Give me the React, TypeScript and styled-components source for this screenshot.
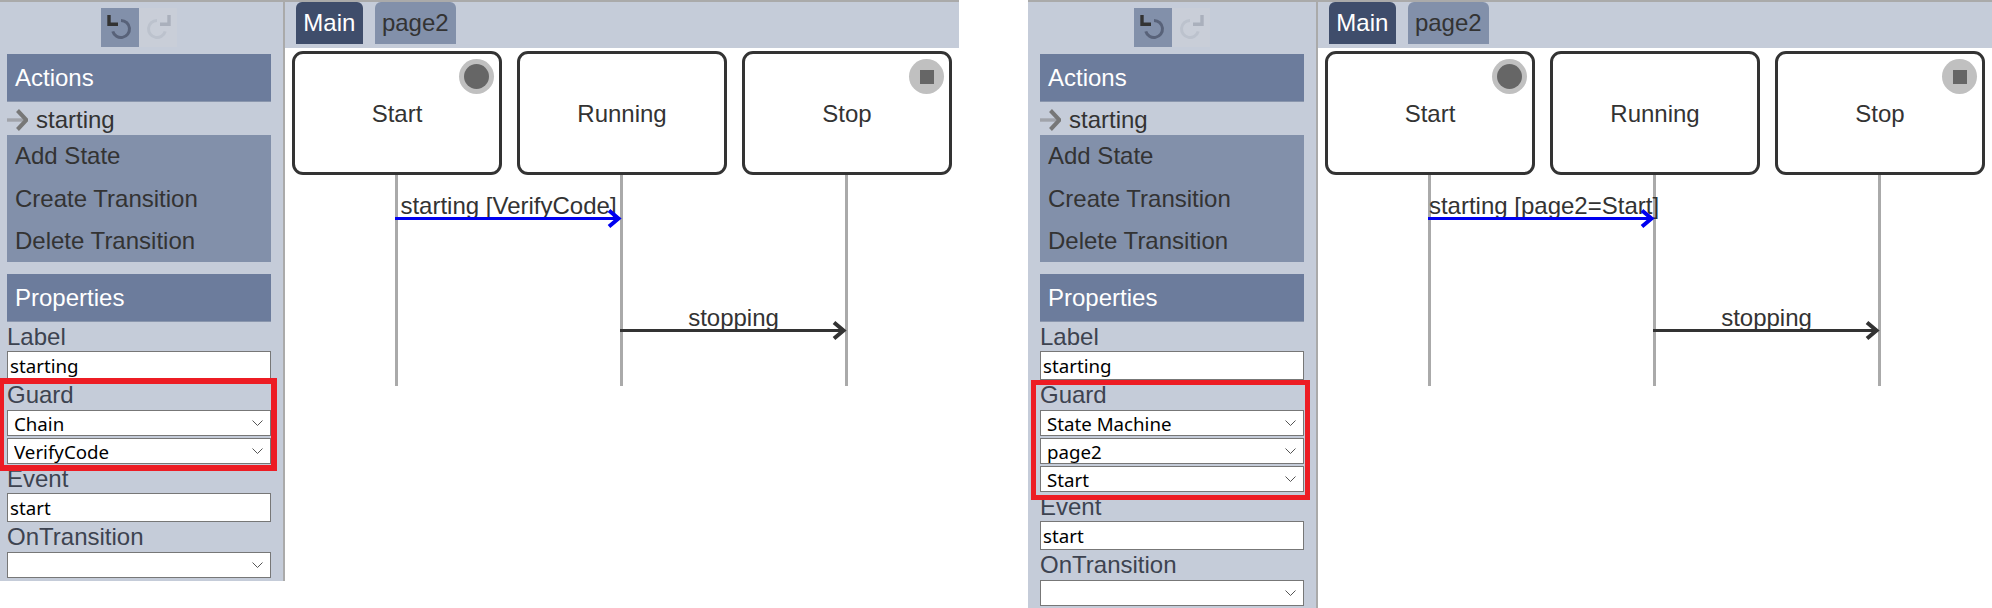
import React from 'react';
import styled, { createGlobalStyle } from 'styled-components';

const GlobalStyle = createGlobalStyle`
  html, body {
    margin: 0;
    padding: 0;
    background: #fff;
  }
  * {
    box-sizing: border-box;
  }
  body {
    font-family: "Liberation Sans", Arial, sans-serif;
    font-size: 24px;
    color: #333;
  }
`;

const INPUT_FONT = `"Noto Sans", "Open Sans", sans-serif`;
const COLUMN_STEP = 225;
const LIFELINE_X = 105;

const Page = styled.div`
  display: flex;
  align-items: flex-start;
  width: 1992px;
  height: 608px;
  overflow: hidden;
`;

const Window = styled.div<{ $width: number; $gap?: number }>`
  display: flex;
  align-items: flex-start;
  flex: none;
  width: ${(p) => p.$width}px;
  margin-right: ${(p) => p.$gap ?? 0}px;
  border-top: 2px solid #aaa;
`;

const Sidebar = styled.aside<{ $inset: number }>`
  flex: none;
  width: ${(p) => p.$inset + 264 + 12 + 2}px;
  padding: 6px 12px 3px ${(p) => p.$inset}px;
  background: #c5ccd9;
  border-right: 2px solid #aaa;
`;

const Toolbar = styled.div`
  display: flex;
  justify-content: center;
  margin-bottom: 7px;
`;

const ToolButton = styled.button<{ $disabled?: boolean }>`
  display: flex;
  align-items: center;
  justify-content: center;
  width: 38px;
  height: 39px;
  padding: 0;
  border: 0;
  background: ${(p) => (p.$disabled ? '#c9ced8' : '#8290aa')};
`;

const SectionHeader = styled.div`
  display: flex;
  align-items: center;
  height: 48px;
  padding-left: 8px;
  color: #fff;
  background: #6c7c9c;
  border-bottom: 1px solid #8a96ad;
`;

const CurrentAction = styled.div`
  display: flex;
  align-items: center;
  gap: 8px;
  height: 33px;
  padding-top: 2px;
  color: #333;
`;

const ActionList = styled.div`
  display: flex;
  flex-direction: column;
  height: 127px;
  margin-bottom: 12px;
  background: #8290aa;
`;

const ActionItem = styled.div`
  height: 42.33px;
  padding: 9px 8px 0;
  line-height: 24px;
  color: #333;

  &:nth-child(2) {
    padding-top: 10px;
  }
`;

const FieldLabel = styled.div`
  display: flex;
  align-items: center;
  height: 29px;
  padding-top: 1px;
  color: #3d4350;
`;

const TextField = styled.input`
  display: block;
  width: 100%;
  height: 29px;
  padding: 0 2px;
  border: 1px solid #777;
  border-radius: 0;
  outline: 0;
  background: #fff;
  color: #000;
  font-family: ${INPUT_FONT};
  font-size: 18.7px;
`;

const SelectStack = styled.div`
  display: flex;
  flex-direction: column;
  gap: 2px;
  margin-top: 1px;
`;

const SelectBox = styled.div`
  position: relative;
  height: 26px;
`;

const SelectField = styled.select`
  display: block;
  width: 100%;
  height: 100%;
  padding: 0 24px 0 6px;
  border: 1px solid #777;
  border-radius: 0;
  outline: 0;
  background: #fff;
  color: #000;
  font-family: ${INPUT_FONT};
  font-size: 18.7px;
  appearance: none;
`;

const Chevron = styled.svg`
  position: absolute;
  top: 10px;
  right: 8px;
  pointer-events: none;
`;

const GuardGroup = styled.div`
  position: relative;
`;

const Highlight = styled.div<{ $top: number; $bottom: number; $stroke: number }>`
  position: absolute;
  top: ${(p) => p.$top}px;
  bottom: ${(p) => p.$bottom}px;
  left: -9px;
  right: -6px;
  border: ${(p) => p.$stroke}px solid #ed1c24;
  pointer-events: none;
`;

const Main = styled.main`
  flex: 1;
  min-width: 0;
`;

const TabBar = styled.div`
  display: flex;
  gap: 12px;
  height: 46px;
  padding-left: 11px;
  background: #c5ccd9;
`;

const Tab = styled.div<{ $active?: boolean }>`
  display: flex;
  align-items: center;
  height: 42px;
  padding: 0 7.3px;
  border-radius: 6px 6px 0 0;
  background: ${(p) => (p.$active ? '#3f4d6b' : '#8290aa')};
  color: ${(p) => (p.$active ? '#fff' : '#333')};
`;

const Canvas = styled.div`
  position: relative;
  display: flex;
  gap: 15px;
  padding: 3px 0 0 7px;
`;

const StateColumn = styled.div`
  display: flex;
  flex-direction: column;
  align-items: center;
  width: 210px;
`;

const StateBox = styled.div`
  position: relative;
  display: flex;
  align-items: center;
  justify-content: center;
  width: 100%;
  height: 124px;
  padding-top: 1px;
  border: 3px solid #333;
  border-radius: 11px;
  background: #fff;
  color: #333;
`;

const Lifeline = styled.div`
  width: 3px;
  height: 211px;
  margin-right: 1px;
  background: #aaa;
`;

const Marker = styled.div`
  position: absolute;
  top: 5px;
  right: 5px;
  display: flex;
  align-items: center;
  justify-content: center;
  width: 35px;
  height: 35px;
  border-radius: 50%;
  background: #c0c0c0;
`;

const StartDot = styled.div`
  width: 25px;
  height: 25px;
  border-radius: 50%;
  background: #666;
`;

const StopSquare = styled.div`
  width: 14px;
  height: 14px;
  background: #666;
`;

const TransitionWrap = styled.div<{ $from: number; $top: number }>`
  position: absolute;
  left: ${(p) => 7 + LIFELINE_X - 2 + p.$from * COLUMN_STEP}px;
  top: ${(p) => p.$top}px;
  width: ${COLUMN_STEP + 2}px;
`;

const TransitionLabel = styled.div<{ $shift: number }>`
  display: flex;
  justify-content: center;
  height: 24px;
  margin-top: -1px;
  margin-bottom: 1px;
  padding-left: ${(p) => p.$shift}px;
  line-height: 24px;
  white-space: nowrap;
  color: #333;
`;

const TransitionArrow = styled.svg`
  display: block;
  margin-top: -2px;
  overflow: visible;
`;

function UndoIcon() {
  return (
    <svg width="38" height="39" viewBox="0 0 38 39" fill="none">
      <path d="M20 12.5a8.5 8.5 0 1 1-8.2 10.8" stroke="#586279" strokeWidth="3" />
      <path d="M8 7v9.3h9" stroke="#333" strokeWidth="3.4" />
    </svg>
  );
}

function RedoIcon() {
  return (
    <svg width="38" height="39" viewBox="0 0 38 39" fill="none">
      <path d="M18 12.5a8.5 8.5 0 1 0 8.2 10.8" stroke="#bcc2cd" strokeWidth="3" />
      <path d="M30 7v9.3h-9" stroke="#aab0bc" strokeWidth="3.4" />
    </svg>
  );
}

function CurrentArrow() {
  return (
    <svg width="21" height="22" viewBox="0 0 21 22" fill="none">
      <path d="M0 11h18" stroke="#a0a3aa" strokeWidth="3.4" />
      <path d="M10.5 1.5 19.5 11l-9 9.5" stroke="#777" strokeWidth="4" />
    </svg>
  );
}

function Select({ value }: { value: string }) {
  return (
    <SelectBox>
      <SelectField value={value} onChange={() => undefined}>
        <option value={value}>{value}</option>
      </SelectField>
      <Chevron width="11" height="6" viewBox="0 0 11 6" fill="none">
        <path d="M.5.5 5.5 5.5 10.5.5" stroke="#555" strokeWidth="1" />
      </Chevron>
    </SelectBox>
  );
}

interface TransitionProps {
  from: number;
  top: number;
  label: string;
  color: string;
  shift?: number;
}

function Transition({ from, top, label, color, shift = 0 }: TransitionProps) {
  const width = COLUMN_STEP;
  return (
    <TransitionWrap $from={from} $top={top}>
      <TransitionLabel $shift={shift}>{label}</TransitionLabel>
      <TransitionArrow width={width} height="3" viewBox={`0 0 ${width} 3`} fill="none">
        <path d={`M0 1.5H${width - 1}`} stroke={color} strokeWidth="3" />
        <path d={`M${width - 11} -6.5 ${width - 1.5} 1.5 ${width - 11} 9.5`} stroke={color} strokeWidth="4" />
      </TransitionArrow>
    </TransitionWrap>
  );
}

interface EditorProps {
  width: number;
  gap?: number;
  inset: number;
  guard: string[];
  guardLabel: string;
  labelShift?: number;
  highlight: { top: number; bottom: number; stroke: number };
}

function Editor({ width, gap, inset, guard, guardLabel, labelShift, highlight }: EditorProps) {
  return (
    <Window $width={width} $gap={gap}>
      <Sidebar $inset={inset}>
        <Toolbar>
          <ToolButton aria-label="Undo">
            <UndoIcon />
          </ToolButton>
          <ToolButton aria-label="Redo" $disabled>
            <RedoIcon />
          </ToolButton>
        </Toolbar>
        <SectionHeader>Actions</SectionHeader>
        <CurrentAction>
          <CurrentArrow />
          starting
        </CurrentAction>
        <ActionList>
          <ActionItem>Add State</ActionItem>
          <ActionItem>Create Transition</ActionItem>
          <ActionItem>Delete Transition</ActionItem>
        </ActionList>
        <SectionHeader>Properties</SectionHeader>
        <FieldLabel>Label</FieldLabel>
        <TextField value="starting" readOnly />
        <GuardGroup>
          <FieldLabel>Guard</FieldLabel>
          <SelectStack>
            {guard.map((value) => (
              <Select key={value} value={value} />
            ))}
          </SelectStack>
          <Highlight $top={highlight.top} $bottom={highlight.bottom} $stroke={highlight.stroke} />
        </GuardGroup>
        <FieldLabel>Event</FieldLabel>
        <TextField value="start" readOnly />
        <FieldLabel>OnTransition</FieldLabel>
        <SelectStack>
          <Select value="" />
        </SelectStack>
      </Sidebar>
      <Main>
        <TabBar>
          <Tab $active>Main</Tab>
          <Tab>page2</Tab>
        </TabBar>
        <Canvas>
          <StateColumn>
            <StateBox>
              Start
              <Marker>
                <StartDot />
              </Marker>
            </StateBox>
            <Lifeline />
          </StateColumn>
          <StateColumn>
            <StateBox>Running</StateBox>
            <Lifeline />
          </StateColumn>
          <StateColumn>
            <StateBox>
              Stop
              <Marker>
                <StopSquare />
              </Marker>
            </StateBox>
            <Lifeline />
          </StateColumn>
          <Transition from={0} top={147} label={guardLabel} color="#0000f0" shift={labelShift} />
          <Transition from={1} top={259} label="stopping" color="#333" />
        </Canvas>
      </Main>
    </Window>
  );
}

export default function App() {
  return (
    <>
      <GlobalStyle />
      <Page>
        <Editor
          width={959}
          gap={69}
          inset={7}
          guard={['Chain', 'VerifyCode']}
          guardLabel="starting [VerifyCode]"
          highlight={{ top: -2, bottom: -7, stroke: 6 }}
        />
        <Editor
          width={964}
          inset={12}
          guard={['State Machine', 'page2', 'Start']}
          guardLabel="starting [page2=Start]"
          labelShift={5}
          highlight={{ top: 0, bottom: -8, stroke: 5 }}
        />
      </Page>
    </>
  );
}
